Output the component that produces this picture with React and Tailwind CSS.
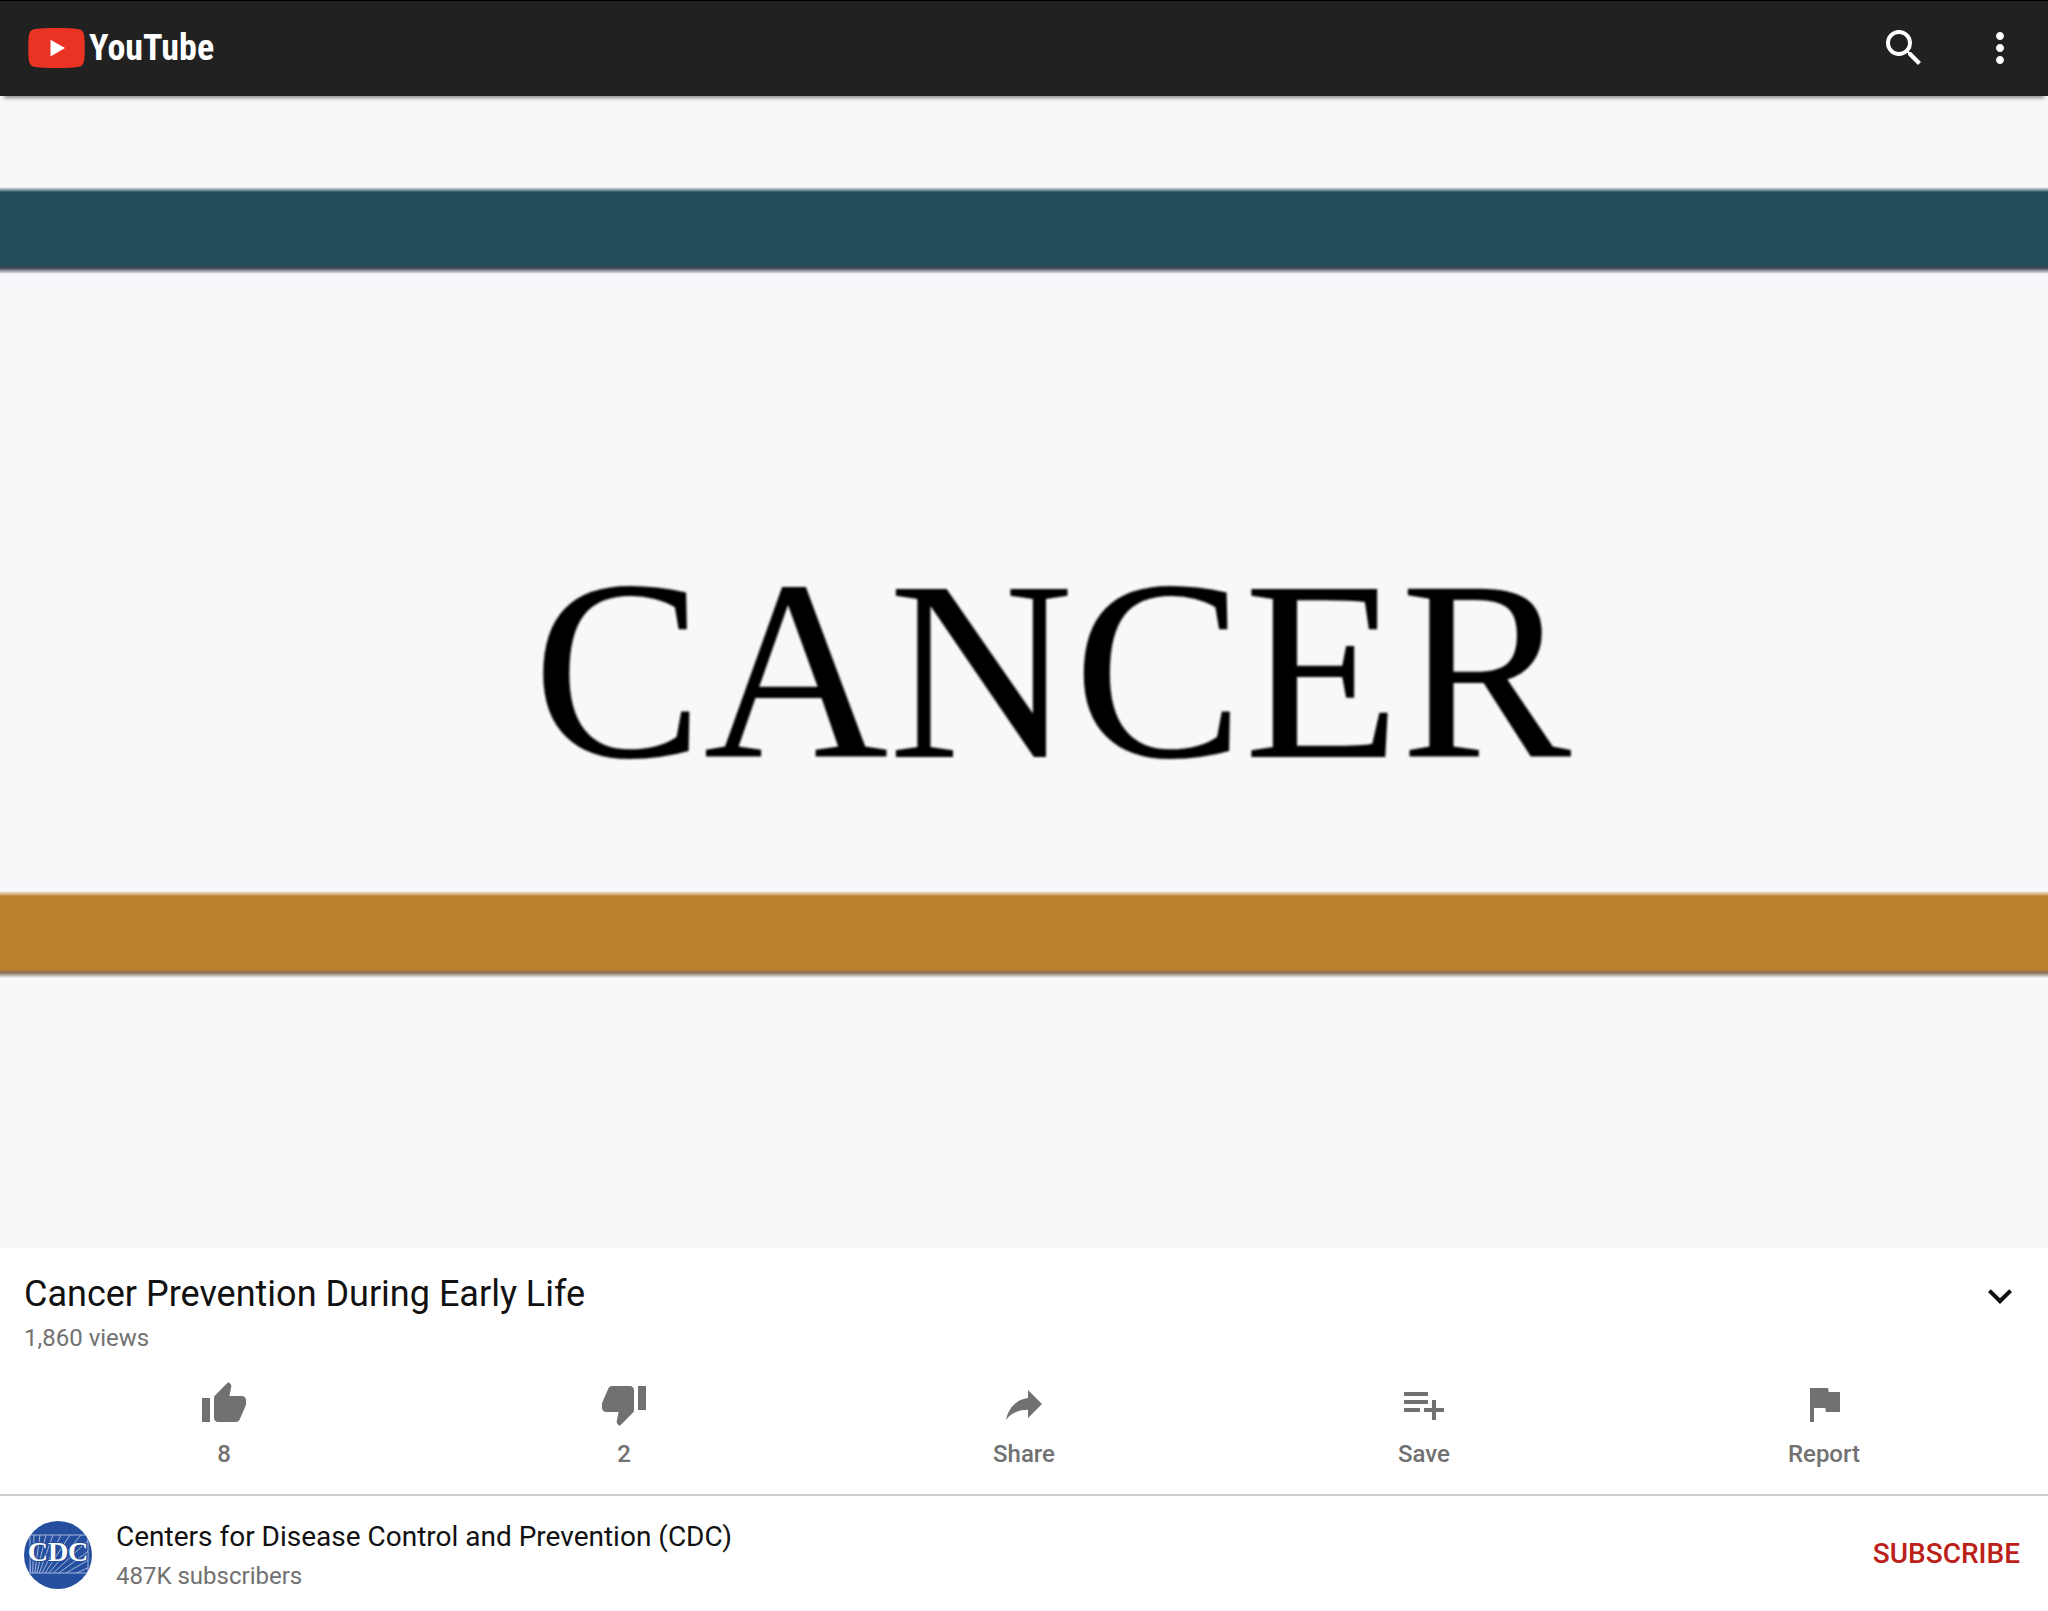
function Icon({ d, className = "size-12" }) {
  return (
    <svg viewBox="0 0 24 24" className={className} fill="currentColor" aria-hidden="true">
      <path d={d} />
    </svg>
  );
}

const icons = {
  search:
    "M15.5 14h-.79l-.28-.27A6.471 6.471 0 0 0 16 9.5 6.5 6.5 0 1 0 9.5 16c1.61 0 3.09-.59 4.23-1.57l.27.28v.79l5 4.99L20.49 19l-4.99-5zm-6 0C7.01 14 5 11.99 5 9.5S7.01 5 9.5 5 14 7.01 14 9.5 11.99 14 9.5 14z",
  more: "M12 8c1.1 0 2-.9 2-2s-.9-2-2-2-2 .9-2 2 .9 2 2 2zm0 2c-1.1 0-2 .9-2 2s.9 2 2 2 2-.9 2-2-.9-2-2-2zm0 6c-1.1 0-2 .9-2 2s.9 2 2 2 2-.9 2-2-.9-2-2-2z",
  expand: "M16.59 8.59L12 13.17 7.41 8.59 6 10l6 6 6-6z",
  like: "M1 21h4V9H1v12zm22-11c0-1.1-.9-2-2-2h-6.31l.95-4.57.03-.32c0-.41-.17-.79-.44-1.06L14.17 1 7.59 7.59C7.22 7.95 7 8.45 7 9v10c0 1.1.9 2 2 2h9c.83 0 1.54-.5 1.84-1.22l3.02-7.05c.09-.23.14-.47.14-.73v-2z",
  dislike:
    "M15 3H6c-.83 0-1.54.5-1.84 1.22l-3.02 7.05c-.09.23-.14.47-.14.73v2c0 1.1.9 2 2 2h6.31l-.95 4.57-.03.32c0 .41.17.79.44 1.06L9.83 23l6.59-6.59c.36-.36.58-.86.58-1.41V5c0-1.1-.9-2-2-2zm4 0v12h4V3h-4z",
  share: "M14 9V5l7 7-7 7v-4.1c-5 0-8.5 1.6-11 5.1 1-5 4-10 11-11z",
  save: "M14 10H2v2h12v-2zm0-4H2v2h12V6zm4 8v-4h-2v4h-4v2h4v4h2v-4h4v-2h-4zM2 16h8v-2H2v2z",
  report: "M14.4 6L14 4H5v17h2v-7h5.6l.4 2h7V6z",
};

const actions = [
  { icon: icons.like, label: "8", name: "Like, 8" },
  { icon: icons.dislike, label: "2", name: "Dislike, 2" },
  { icon: icons.share, label: "Share", name: "Share" },
  { icon: icons.save, label: "Save", name: "Save" },
  { icon: icons.report, label: "Report", name: "Report" },
];

function Header() {
  return (
    <header className="relative z-10 flex h-24 items-center justify-between border-t border-black bg-[#212121] pb-px pl-7 pr-6 text-white shadow-[0_6px_4px_-4px_rgba(0,0,0,0.45)]">
      <a href="#" aria-label="YouTube" className="flex items-center gap-1">
        <svg viewBox="0 0 57 40" className="h-10 w-[57px]" aria-hidden="true">
          <path
            d="M28.500 0C40 0 47 .4 51 1.200C54 2 55.500 4 56 7C57 13 57 27 56 33C55.500 36 54 38 51 38.800C47 39.600 40 40 28.500 40S10 39.600 6 38.800C3 38 1.500 36 1 33C0 27 0 13 1 7C1.500 4 3 2 6 1.200C10 .4 17 0 28.500 0Z"
            fill="#ea3323"
          />
          <path d="M22.500 11.800V28.500L37 20.100Z" fill="#fff" />
        </svg>
        <span className="font-['Roboto_Condensed','Liberation_Sans_Narrow',sans-serif] text-4xl font-bold leading-10">
          YouTube
        </span>
      </a>
      <div className="flex gap-12">
        <button type="button" aria-label="Search">
          <Icon d={icons.search} />
        </button>
        <button type="button" aria-label="More options">
          <Icon d={icons.more} />
        </button>
      </div>
    </header>
  );
}

function VideoFrame() {
  return (
    <section
      aria-label="Video"
      className="grid aspect-video w-full grid-rows-[91fr_87fr_617fr_87fr_270fr] bg-[#f8f8f8]"
    >
      <div />
      <div className="bg-[linear-gradient(to_bottom,#f8f8f8_0%,#244e5a_6%,#244e5a_90%,#3d4356_93%,#f8f8fa_100%)]" />
      <div className="flex items-center justify-center bg-[linear-gradient(to_bottom,#f8f8fc_0%,#f8f8f8_8%,#f8f8f8_92%,#f8f8fc_100%)] pl-14 pt-44">
        <span className="font-['Liberation_Serif',serif] text-[256px] leading-none text-black blur-[1px]">CANCER</span>
      </div>
      <div className="bg-[linear-gradient(to_bottom,#f8f8f8_0%,#bc802c_6%,#bc802c_90%,#8a7060_94%,#f8f8fa_100%)]" />
      <div />
    </section>
  );
}

const rayEnds = [-8, -2, 4, 10, 17, 25, 34, 45, 58, 74, 95, 125];

function Avatar() {
  return (
    <svg viewBox="0 0 68 68" className="size-[68px] shrink-0 rounded-full" role="img" aria-label="CDC">
      <defs>
        <clipPath id="seal">
          <rect x="6" y="14" width="58" height="38" />
        </clipPath>
      </defs>
      <rect width="68" height="68" fill="#254f9e" />
      <g stroke="#a3b5da" clipPath="url(#seal)">
        {rayEnds.map((x) => (
          <line key={x} x1="8" y1="72" x2={x + 12} y2="14" />
        ))}
      </g>
      <rect x="6" y="14" width="58" height="38" fill="none" stroke="#a3b5da" />
      <text
        x="34"
        y="40"
        textAnchor="middle"
        fontSize="28"
        fontWeight="bold"
        fontFamily="Liberation Serif, serif"
        fill="#fff"
        stroke="#254f9e"
        strokeWidth="2"
        paintOrder="stroke"
      >
        CDC
      </text>
    </svg>
  );
}

export default function App() {
  return (
    <div className="min-h-screen bg-white font-[Roboto,sans-serif] text-[#111]">
      <Header />
      <main>
        <VideoFrame />
        <section className="flex items-start justify-between px-6 pt-6">
          <div>
            <h1 className="text-4xl leading-[44px]">Cancer Prevention During Early Life</h1>
            <p className="mt-1.5 text-2xl leading-8 text-[#717171]">1,860 views</p>
          </div>
          <button type="button" aria-label="Show description">
            <Icon d={icons.expand} />
          </button>
        </section>
        <section className="flex px-6 pb-[22px] pt-[26px] text-[#717171]">
          {actions.map((a) => (
            <button key={a.name} type="button" aria-label={a.name} className="flex flex-1 flex-col items-center gap-2">
              <Icon d={a.icon} />
              <span className="text-2xl font-medium leading-9">{a.label}</span>
            </button>
          ))}
        </section>
        <section className="flex items-center justify-between border-t-2 border-[#ccc] px-6 pb-4 pt-5">
          <a href="#" className="flex items-center gap-6">
            <Avatar />
            <span className="flex flex-col">
              <span className="text-[28px] leading-[42px]">Centers for Disease Control and Prevention (CDC)</span>
              <span className="text-2xl leading-9 text-[#717171]">487K subscribers</span>
            </span>
          </a>
          <button type="button" className="px-1 pb-0.5 text-[28px] font-medium leading-10 text-[#bb2118]">
            SUBSCRIBE
          </button>
        </section>
      </main>
    </div>
  );
}
